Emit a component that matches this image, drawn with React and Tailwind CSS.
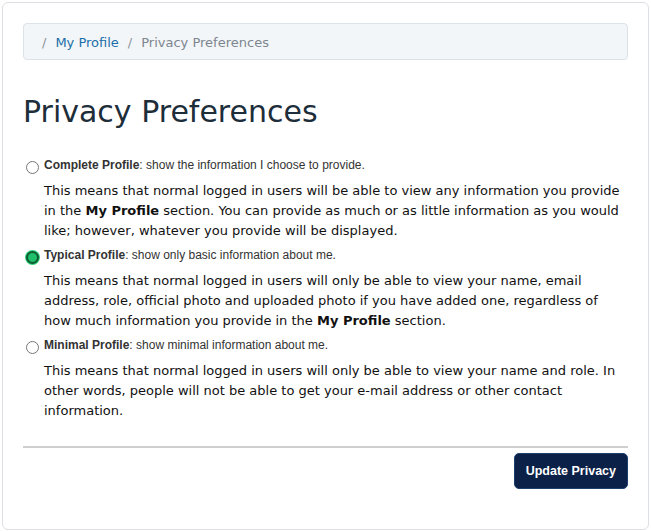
import { useState } from "react";

const options = [
  {
    id: "complete",
    title: "Complete Profile",
    hint: "show the information I choose to provide.",
    body: (
      <>
        This means that normal logged in users will be able to view any information you provide
        in the <b>My Profile</b> section. You can provide as much or as little information as you would
        like; however, whatever you provide will be displayed.
      </>
    ),
  },
  {
    id: "typical",
    title: "Typical Profile",
    hint: "show only basic information about me.",
    body: (
      <>
        This means that normal logged in users will only be able to view your name, email
        address, role, official photo and uploaded photo if you have added one, regardless of
        how much information you provide in the <b>My Profile</b> section.
      </>
    ),
  },
  {
    id: "minimal",
    title: "Minimal Profile",
    hint: "show minimal information about me.",
    body: (
      <>
        This means that normal logged in users will only be able to view your name and role. In
        other words, people will not be able to get your e-mail address or other contact
        information.
      </>
    ),
  },
];

function App() {
  const [privacy, setPrivacy] = useState("typical");

  return (
    <div className="p-[2px] font-['DejaVu_Sans',sans-serif]">
      <div className="w-[647px] rounded-md border border-[#dcdfe3] bg-white px-5 pt-5 pb-[40px]">
        <nav className="flex h-[37px] items-center rounded border border-[#dde2e7] bg-[#f3f6f9] pt-[2px] pl-[18px] text-[13px]">
          <span className="pr-[9px] text-[#8a939b]">/</span>
          <a href="#" className="text-[#1a6fa8]">My Profile</a>
          <span className="px-[9px] text-[#8a939b]">/</span>
          <span className="text-[#7d868e]">Privacy Preferences</span>
        </nav>

        <h1 className="mt-[34px] mb-[28px] text-[30px] leading-[36px] text-[#1d2d3a]">
          Privacy Preferences
        </h1>

        <form onSubmit={(e) => e.preventDefault()}>
          {options.map((opt) => (
            <div key={opt.id} className="mb-[7px]">
              <label className="flex h-[14px] items-start gap-[5px] pl-[3px] font-['Liberation_Sans',Arial,sans-serif] text-[12px] leading-[14px] text-[#333]">
                <input
                  type="radio"
                  name="privacy"
                  value={opt.id}
                  checked={privacy === opt.id}
                  onChange={() => setPrivacy(opt.id)}
                  className="relative top-[3px] h-[13px] w-[13px] shrink-0 appearance-none rounded-full border border-[#767676] bg-white checked:border-[2px] checked:border-[#0e5a33] checked:bg-[#1fbf6a] checked:ring-1 checked:ring-[#2fd57a]"
                />
                <span>
                  <b>{opt.title}</b>: {opt.hint}
                </span>
              </label>
              <p className="mt-[9px] pl-[21px] text-[13px] leading-[20px] text-[#111]">{opt.body}</p>
            </div>
          ))}

          <hr className="mt-[25px] border-t-2 border-[#cfcfcf]" />

          <div className="mt-[5px] flex justify-end">
            <button
              type="submit"
              className="h-[36px] rounded-[5px] border border-[#1d3f6e] bg-[#0b2147] px-[11px] font-['Liberation_Sans',Arial,sans-serif] text-[12.5px] font-bold text-white"
            >
              Update Privacy
            </button>
          </div>
        </form>
      </div>
    </div>
  );
}

export default App;
